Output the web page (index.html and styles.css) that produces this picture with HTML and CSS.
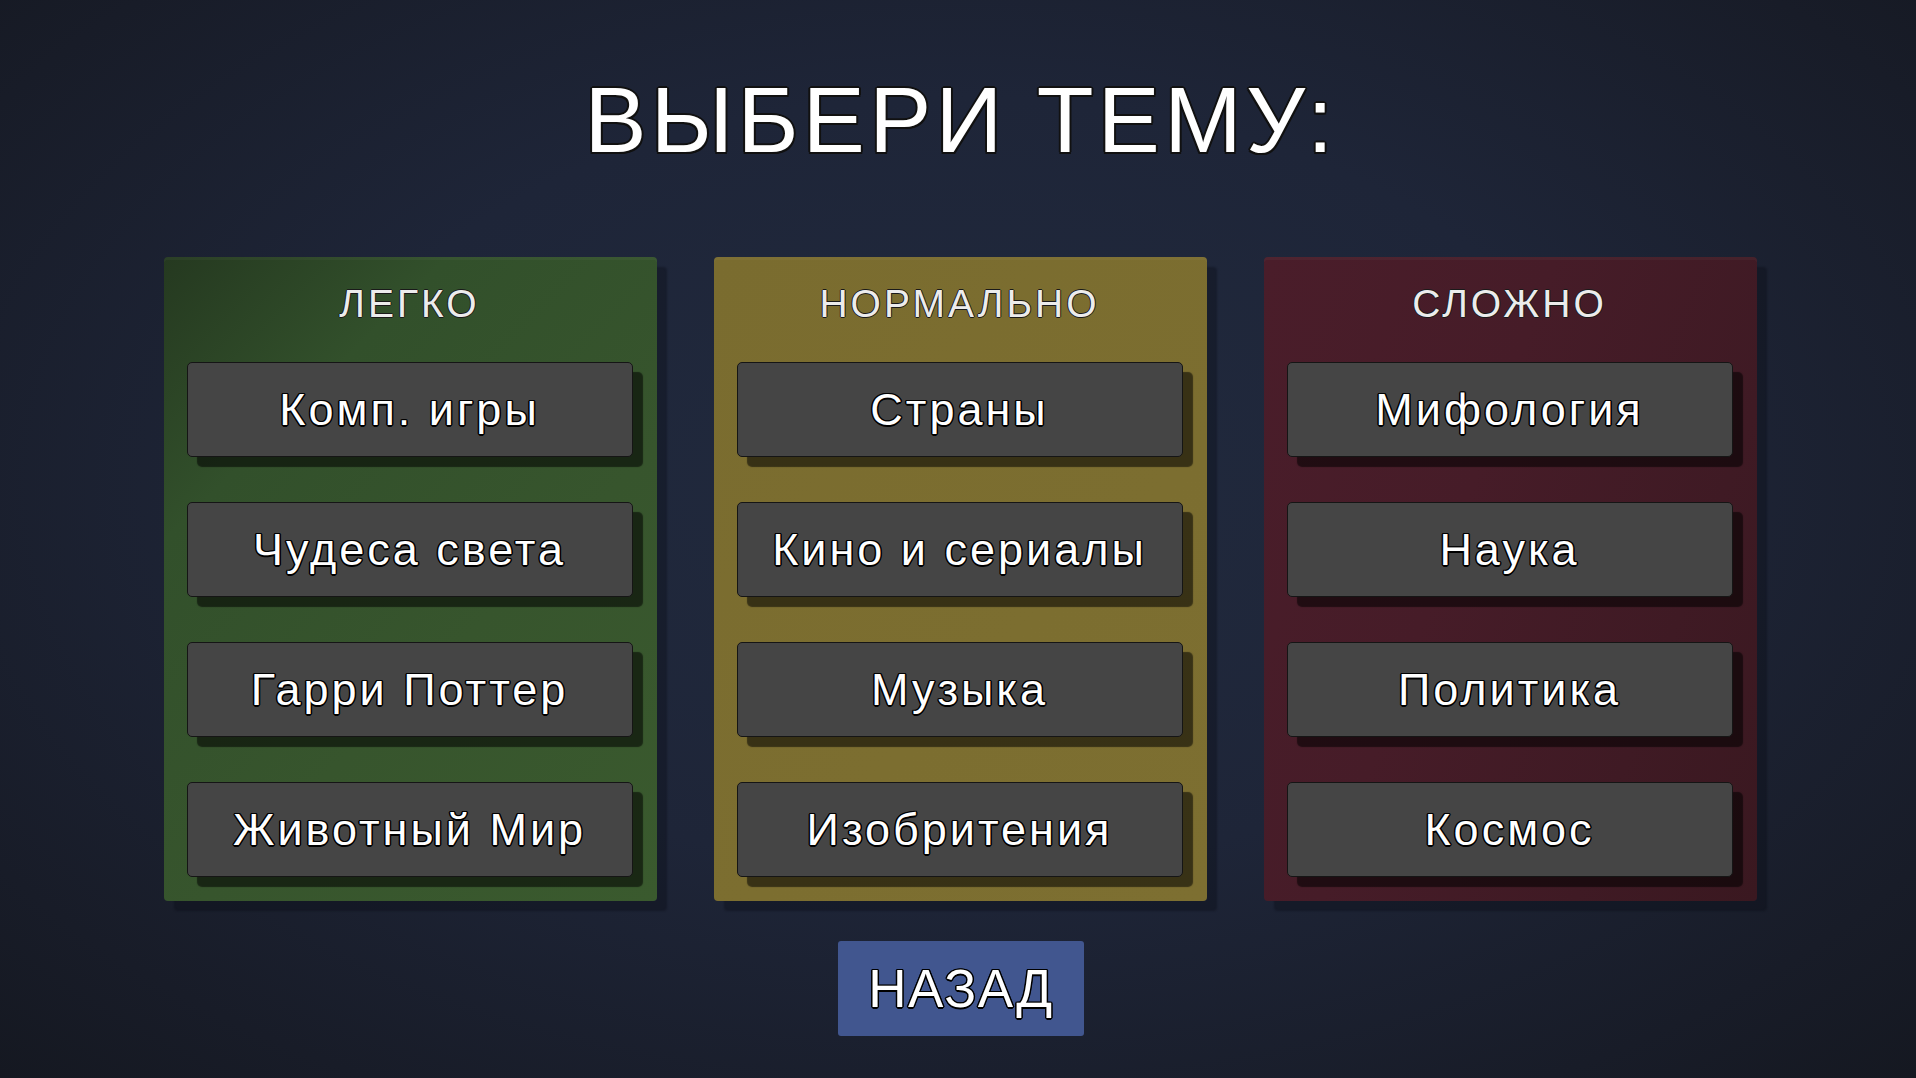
FILE: index.html
```html
<!DOCTYPE html>
<html lang="ru">
<head>
<meta charset="utf-8">
<title>Выбери тему</title>
<link rel="stylesheet" href="styles.css">
</head>
<body>
<main class="screen">
  <h1 class="title">ВЫБЕРИ ТЕМУ:</h1>
  <div class="columns">
    <section class="panel panel-easy">
      <h2 class="panel-title">ЛЕГКО</h2>
      <div class="btn-list">
        <button class="topic">Комп. игры</button>
        <button class="topic">Чудеса света</button>
        <button class="topic">Гарри Поттер</button>
        <button class="topic">Животный Мир</button>
      </div>
    </section>
    <section class="panel panel-normal">
      <h2 class="panel-title">НОРМАЛЬНО</h2>
      <div class="btn-list">
        <button class="topic">Страны</button>
        <button class="topic">Кино и сериалы</button>
        <button class="topic">Музыка</button>
        <button class="topic">Изобритения</button>
      </div>
    </section>
    <section class="panel panel-hard">
      <h2 class="panel-title">СЛОЖНО</h2>
      <div class="btn-list">
        <button class="topic">Мифология</button>
        <button class="topic">Наука</button>
        <button class="topic">Политика</button>
        <button class="topic">Космос</button>
      </div>
    </section>
  </div>
  <button class="back">НАЗАД</button>
</main>
</body>
</html>
```
FILE: styles.css
```css
html, body {
  margin: 0;
  padding: 0;
  height: 100%;
}
body {
  background: radial-gradient(ellipse 75% 80% at 50% 45%, #212a3e 0%, #1e2538 45%, #181c28 80%, #14171f 100%);
  font-family: "Liberation Sans", Arial, sans-serif;
  color: #fff;
  overflow: hidden;
}
.screen {
  height: 1078px;
  display: flex;
  flex-direction: column;
  align-items: center;
  padding-top: 74px;
  box-sizing: border-box;
}
.title {
  margin: 0 0 0 6px;
  font-size: 93px;
  line-height: 1;
  font-weight: 400;
  letter-spacing: 4.3px;
  color: #fff;
  text-shadow:
    -2px 0 0 #111, 2px 0 0 #111, 0 -2px 0 #111, 0 2px 0 #111,
    -1.5px -1.5px 0 #111, 1.5px -1.5px 0 #111, -1.5px 1.5px 0 #111, 1.5px 1.5px 0 #111;
}
.columns {
  display: flex;
  gap: 57px;
  margin-top: 90px;
  margin-left: 4px;
}
.panel {
  width: 493px;
  height: 644px;
  box-sizing: border-box;
  padding: 27px 24px 24px 23px;
  border-radius: 4px;
  display: flex;
  flex-direction: column;
  align-items: stretch;
  box-shadow: 10px 10px 2px rgba(10, 12, 20, 0.35), inset 0 3px 0 rgba(255,255,255,0.03);
}
.panel-easy {
  background: linear-gradient(135deg, #253920 0%, #32502b 25%, #37552d 60%, #3a5a2e 100%);
}
.panel-normal {
  background: linear-gradient(135deg, #7a6c2f 0%, #7c6e30 60%, #7d6f31 100%);
}
.panel-hard {
  background: linear-gradient(110deg, #4a1d2a 0%, #461c28 40%, #3f1a24 75%, #3a1820 100%);
}
.panel-title {
  margin: 0 0 39px;
  font-size: 39px;
  line-height: 1;
  font-weight: 400;
  letter-spacing: 3px;
  text-align: center;
  color: #ececec;
  text-shadow: -1px 0 0 #1a1a1a, 1px 0 0 #1a1a1a, 0 -1px 0 #1a1a1a, 0 1px 0 #1a1a1a;
}
.btn-list {
  display: flex;
  flex-direction: column;
  gap: 45px;
}
.topic {
  height: 95px;
  width: 100%;
  box-sizing: border-box;
  background: #454545;
  border: 1.5px solid #151515;
  border-radius: 5px;
  font-family: "Liberation Sans", Arial, sans-serif;
  font-size: 45px;
  letter-spacing: 3px;
  color: #fff;
  padding: 0;
  box-shadow: 10px 10px 1px rgba(0, 0, 0, 0.55);
  text-shadow:
    -1.5px 0 0 #000, 1.5px 0 0 #000, 0 -1.5px 0 #000, 0 1.5px 0 #000,
    -1px -1px 0 #000, 1px -1px 0 #000, -1px 1px 0 #000, 1px 1px 0 #000;
}
.back {
  margin: 40px 0 0 6px;
  width: 246px;
  height: 95px;
  background: #41568f;
  border: none;
  border-radius: 3px;
  font-family: "Liberation Sans", Arial, sans-serif;
  font-size: 53px;
  letter-spacing: 1.5px;
  color: #fff;
  padding: 0;
  text-shadow:
    -1.5px 0 0 #000, 1.5px 0 0 #000, 0 -1.5px 0 #000, 0 1.5px 0 #000,
    -1px -1px 0 #000, 1px -1px 0 #000, -1px 1px 0 #000, 1px 1px 0 #000;
}
```
